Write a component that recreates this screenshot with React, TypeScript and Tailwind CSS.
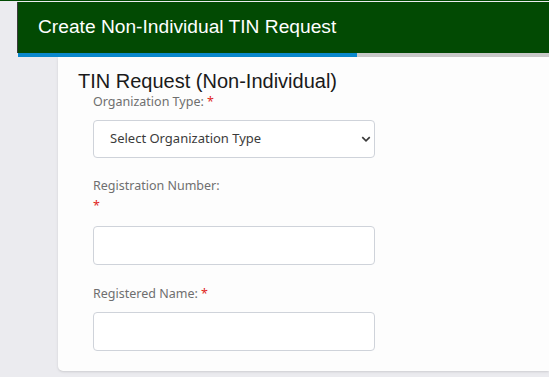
import React from 'react';

const Label = ({ text, breakStar }: { text: string; breakStar?: boolean }) => (
    <label
        className="block text-[12.5px] leading-[18px] text-[#6f6f6f]"
        style={{ fontFamily: '"Noto Sans", sans-serif' }}
    >
        <span className="whitespace-nowrap">{text}</span>{' '}
        <span className={`text-[#e0261b] ${breakStar ? 'block mt-[2px]' : ''}`}>*</span>
    </label>
);

const TextInput = ({ className = '' }: { className?: string }) => (
    <input
        type="text"
        className={`block w-[282px] h-[39px] rounded-[4px] border border-[#cfd3da] bg-white px-3 outline-none ${className}`}
    />
);

const App: React.FC = () => {
    return (
        <div className="h-[377px] w-full overflow-hidden bg-[#ebebef] font-['Liberation_Sans',Arial,sans-serif]">
            <div className="h-px bg-[#004a02]" />
            <div className="pl-[17px] pt-px">
                <header className="h-[51px] border-l border-[#3a3a3a] bg-[#024a03] flex items-center pl-5">
                    <h1 className="text-[19.2px] text-white">Create Non-Individual TIN Request</h1>
                </header>
                <div className="flex h-[4px] ml-px">
                    <div className="w-[339px] bg-[#0a88cc]" />
                    <div className="flex-1 bg-[#c8c8c8]" />
                </div>

                <div className="ml-[41px] bg-[#fdfdfd] rounded-bl-[5px] shadow-sm pt-[12px] pb-[20px] pl-5">
                    <h2 className="text-[20px] leading-[24px] text-[#1a1a1a]">TIN Request (Non-Individual)</h2>

                    <div className="pl-[15px]">
                        <Label text="Organization Type:" />
                        <div className="relative mt-[9px] w-[282px]">
                            <select
                                className="block w-full h-[38px] appearance-none rounded-[4px] border border-[#cfd3da] bg-white pl-4 text-[13px] text-[#3b3b3b] outline-none"
                                style={{ fontFamily: '"Noto Sans", sans-serif' }}
                                defaultValue=""
                            >
                                <option value="">Select Organization Type</option>
                            </select>
                            <svg
                                className="pointer-events-none absolute right-[4px] top-[14px]"
                                width="10"
                                height="10"
                                viewBox="0 0 16 16"
                            >
                                <path d="M2 5l6 6 6-6" fill="none" stroke="#3a3a3a" strokeWidth="2.6" />
                            </svg>
                        </div>

                        <div className="mt-[19px]">
                            <Label text="Registration Number:" breakStar />
                        </div>
                        <TextInput className="mt-[11px]" />

                        <div className="mt-[20px]">
                            <Label text="Registered Name:" />
                        </div>
                        <TextInput className="mt-[9px]" />
                    </div>
                </div>
            </div>
        </div>
    );
};

export default App;
